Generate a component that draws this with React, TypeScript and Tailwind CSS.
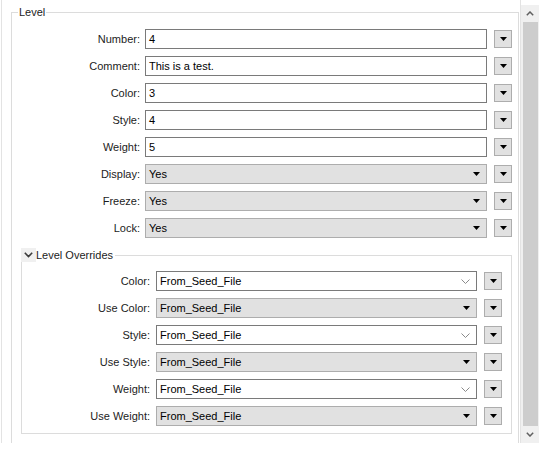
const font = "font-['Liberation_Sans',Arial,sans-serif]";

type Field = { label: string; value: string; kind: "text" | "select" | "combo" };

const levelFields: Field[] = [
  { label: "Number:", value: "4", kind: "text" },
  { label: "Comment:", value: "This is a test.", kind: "text" },
  { label: "Color:", value: "3", kind: "text" },
  { label: "Style:", value: "4", kind: "text" },
  { label: "Weight:", value: "5", kind: "text" },
  { label: "Display:", value: "Yes", kind: "select" },
  { label: "Freeze:", value: "Yes", kind: "select" },
  { label: "Lock:", value: "Yes", kind: "select" },
];

const overrideFields: Field[] = [
  { label: "Color:", value: "From_Seed_File", kind: "combo" },
  { label: "Use Color:", value: "From_Seed_File", kind: "select" },
  { label: "Style:", value: "From_Seed_File", kind: "combo" },
  { label: "Use Style:", value: "From_Seed_File", kind: "select" },
  { label: "Weight:", value: "From_Seed_File", kind: "combo" },
  { label: "Use Weight:", value: "From_Seed_File", kind: "select" },
];

function Triangle() {
  return (
    <svg width="7" height="4" viewBox="0 0 7 4" className="block">
      <polygon points="0,0 7,0 3.5,4" fill="#000" />
    </svg>
  );
}

function ThinChevron() {
  return (
    <svg width="9" height="5" viewBox="0 0 9 5" className="block">
      <polyline points="0.5,0.5 4.5,4.5 8.5,0.5" fill="none" stroke="#8a8a8a" strokeWidth="1" />
    </svg>
  );
}

function FieldBox({ field, iconPad }: { field: Field; iconPad: string }) {
  if (field.kind === "text") {
    return (
      <div className="flex h-[20px] flex-1 items-center border border-[#7a7a7a] bg-white pl-[3px] text-[#000]">
        {field.value}
      </div>
    );
  }
  const gray = field.kind === "select";
  return (
    <div
      className={
        gray
          ? "flex h-[20px] flex-1 items-center border border-[#adadad] bg-[#e1e1e1] pl-[3px] text-[#000]"
          : "flex h-[20px] flex-1 items-center border border-[#7a7a7a] bg-white pl-[3px] text-[#000]"
      }
    >
      <span className="flex-1">{field.value}</span>
      <span className={iconPad}>{gray ? <Triangle /> : <ThinChevron />}</span>
    </div>
  );
}

function MenuButton() {
  return (
    <div className="ml-[7px] flex h-[18px] w-[18px] items-center justify-center border border-[#adadad] bg-[#e1e1e1]">
      <Triangle />
    </div>
  );
}

function Row({ field, labelW, inputGap, iconPad }: { field: Field; labelW: string; inputGap: string; iconPad: string }) {
  return (
    <div className="flex h-[20px] items-center">
      <div className={`${labelW} text-right text-[#1c1c1c]`}>{field.label}</div>
      <div className={`${inputGap} flex flex-1 items-center`}>
        <FieldBox field={field} iconPad={iconPad} />
        <MenuButton />
      </div>
    </div>
  );
}

export default function App() {
  return (
    <div className={`${font} flex h-[452px] w-[545px] overflow-hidden bg-white text-[11px] leading-[13px]`}>
      <div className="w-[1px]" />
      <div className="h-[443px] w-[520px] overflow-hidden border-l border-r border-[#e3e3e3]">
        <div className="ml-[9px] mt-[12px] w-[508px] border border-[#dcdcdc] pb-[20px]">
          <div className="-mt-[7px] ml-[6px] w-fit bg-white px-[1px] text-[#1c1c1c]">Level</div>
          <div className="mt-[10px] flex flex-col gap-[7px] pr-[6px]">
            {levelFields.map((f) => (
              <Row key={f.label} field={f} labelW="w-[128px]" inputGap="ml-[5px]" iconPad="pr-[6px]" />
            ))}
          </div>
          <div className="ml-[9px] mr-[6px] mt-[17px] border border-[#dcdcdc] pb-[7px]">
            <div className="-ml-[1px] -mt-[8px] flex h-[14px] w-fit items-center bg-white pr-[2px]">
              <div className="flex h-[14px] w-[15px] items-center justify-center bg-[#f0f0f0]">
                <svg width="9" height="6" viewBox="0 0 9 6" className="block">
                  <polyline points="0.8,0.8 4.5,4.5 8.2,0.8" fill="none" stroke="#3c3c3c" strokeWidth="1.6" />
                </svg>
              </div>
              <span className="text-[#1c1c1c]">Level Overrides</span>
            </div>
            <div className="mt-[9px] flex flex-col gap-[7px] pr-[9px]">
              {overrideFields.map((f) => (
                <Row key={f.label} field={f} labelW="w-[128px]" inputGap="ml-[6px]" iconPad="pr-[6px]" />
              ))}
            </div>
          </div>
        </div>
      </div>
      <div className="mt-[5px] flex h-[438px] w-[18px] flex-col bg-[#f0f0f0]">
        <div className="flex h-[17px] items-center justify-center">
          <svg width="8" height="5" viewBox="0 0 8 5" className="block">
            <polyline points="0.8,4.2 4,1 7.2,4.2" fill="none" stroke="#606060" strokeWidth="1.5" />
          </svg>
        </div>
        <div className="ml-[2px] mr-[1px] flex-1 bg-[#cdcdcd]" />
        <div className="flex h-[17px] items-center justify-center">
          <svg width="8" height="5" viewBox="0 0 8 5" className="block">
            <polyline points="0.8,0.8 4,4 7.2,0.8" fill="none" stroke="#606060" strokeWidth="1.5" />
          </svg>
        </div>
      </div>
    </div>
  );
}
